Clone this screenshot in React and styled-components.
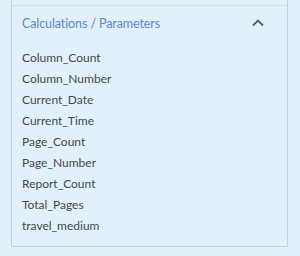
import React, { useState } from "react";
import styled, { createGlobalStyle } from "styled-components";

const GlobalStyle = createGlobalStyle`
  body {
    margin: 0;
    background: #e1f0f9;
    font-family: "Lato", "Noto Sans", sans-serif;
  }
`;

const params = [
  "Column_Count",
  "Column_Number",
  "Current_Date",
  "Current_Time",
  "Page_Count",
  "Page_Number",
  "Report_Count",
  "Total_Pages",
  "travel_medium",
];

const App = () => {
  const [open, setOpen] = useState(true);

  return (
    <>
      <GlobalStyle />
      <Wrapper>
        <PrevSection />
        <Section>
          <Header onClick={() => setOpen(!open)}>
            <Title>Calculations / Parameters</Title>
            <Chevron open={open} width="14" height="9" viewBox="0 0 14 9" fill="none">
              <path d="M2 7.5 7 2.5l5 5" stroke="#555b60" strokeWidth="1.8" />
            </Chevron>
          </Header>
          {open && (
            <List>
              {params.map((p) => (
                <Item key={p}>{p}</Item>
              ))}
            </List>
          )}
        </Section>
      </Wrapper>
    </>
  );
};

export default App;

const Wrapper = styled.div`
  margin-left: 11px;
  width: 275px;
  border: 1px solid #c6d2d9;
  border-top: none;
`;
const PrevSection = styled.div`
  height: 5px;
`;
const Section = styled.div`
  border-top: 1px solid #d3dfe6;
`;
const Header = styled.div`
  height: 34px;
  display: flex;
  align-items: center;
  justify-content: space-between;
  padding: 0 22px 0 10px;
  cursor: pointer;
`;
const Title = styled.div`
  font-size: 12.5px;
  color: #5588dc;
  letter-spacing: -0.1px;
`;
const Chevron = styled.svg`
  transform: ${(props) => (props.open ? "none" : "rotate(180deg)")};
  margin-top: -1px;
`;
const List = styled.div`
  display: flex;
  flex-direction: column;
  padding: 7px 0 10px 10px;
`;
const Item = styled.div`
  height: 21px;
  line-height: 21px;
  font-size: 12px;
  color: #45494d;
`;
